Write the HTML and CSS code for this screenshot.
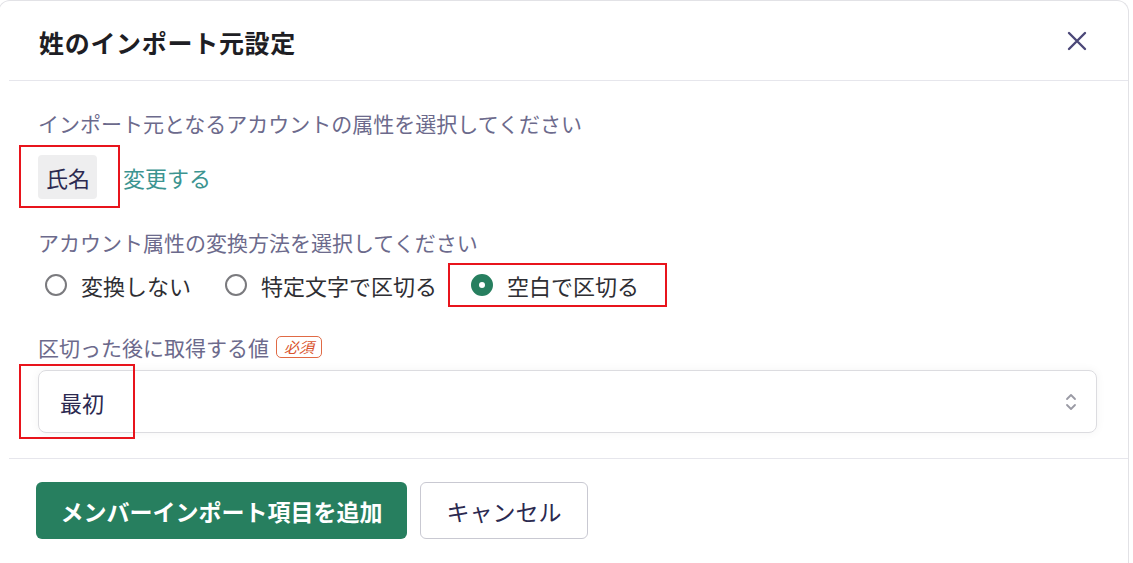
FILE: index.html
```html
<!DOCTYPE html>
<html lang="ja">
<head>
<meta charset="utf-8">
<link rel="stylesheet" href="styles.css">
</head>
<body>
<div class="dialog">
  <div class="header">
    <h1 class="title">姓のインポート元設定</h1>
    <button class="close" aria-label="閉じる">
      <svg width="20" height="20" viewBox="0 0 20 20"><path d="M2 2 L18 18 M18 2 L2 18" stroke="#4b4878" stroke-width="2.4" stroke-linecap="round" fill="none"/></svg>
    </button>
  </div>
  <div class="body">
    <div class="label first">インポート元となるアカウントの属性を選択してください</div>
    <div class="chip-row">
      <span class="chip">氏名</span>
      <a class="link">変更する</a>
    </div>
    <div class="label second">アカウント属性の変換方法を選択してください</div>
    <div class="radios">
      <label class="radio"><span class="circle"></span>変換しない</label>
      <label class="radio"><span class="circle"></span>特定文字で区切る</label>
      <label class="radio"><span class="circle checked"></span>空白で区切る</label>
    </div>
    <div class="label third">区切った後に取得する値<span class="badge">必須</span></div>
    <div class="select">
      <span class="select-text">最初</span>
      <svg class="chev" width="12" height="20" viewBox="0 0 12 20"><path d="M2 7 L6 3 L10 7 M2 13 L6 17 L10 13" stroke="#9a9aa4" stroke-width="1.8" fill="none" stroke-linecap="round" stroke-linejoin="round"/></svg>
    </div>
    <span class="mark m1"></span>
    <span class="mark m2"></span>
    <span class="mark m3"></span>
  </div>
  <div class="footer">
    <button class="btn primary">メンバーインポート項目を追加</button>
    <button class="btn secondary">キャンセル</button>
  </div>
</div>
</body>
</html>
```
FILE: styles.css
```css
html, body {
  margin: 0;
  padding: 0;
  background: #ffffff;
  font-family: "Noto Sans CJK JP", "Noto Sans", sans-serif;
  overflow: hidden;
}
.dialog {
  margin-left: -2px;
  width: 1131px;
  height: 563px;
  box-sizing: border-box;
  border: 1px solid #e2e2e6;
  border-bottom: none;
  border-radius: 12px 12px 0 0;
  background: #fff;
  overflow: hidden;
}
.header {
  height: 79px;
  margin-left: 10px;
  padding: 0 41px 0 30px;
  border-bottom: 1px solid #e6e6ec;
  display: flex;
  align-items: center;
  justify-content: space-between;
}
.title {
  margin: 0;
  font-size: 25px;
  font-weight: 700;
  color: #1e1e24;
  letter-spacing: 0.7px;
  line-height: 1;
  padding-top: 4px;
}
.close {
  border: none;
  background: none;
  padding: 0;
  width: 20px;
  height: 20px;
  display: flex;
}
.body {
  position: relative;
  padding: 28px 31px 25px 39px;
  border-bottom: 1px solid #e6e6ec;
  margin-left: 10px;
}
.body > * { margin-left: -10px; }
.body > .mark { margin-left: 0; }
.label {
  font-size: 21px;
  line-height: 28px;
  color: #6c6a8c;
}
.chip-row {
  margin-top: 18px;
  display: flex;
  align-items: center;
}
.chip {
  background: #eeeeef;
  border-radius: 4px;
  height: 44px;
  line-height: 44px;
  padding: 0 7px 0 8px;
  font-size: 22px;
  color: #2b2950;
}
.link {
  font-size: 22px;
  color: #3c9490;
  margin-left: 26px;
}
.label.second { margin-top: 29px; }
.radios {
  margin-top: 15px;
  display: flex;
  align-items: center;
  height: 28px;
  padding-left: 7px;
}
.radio {
  display: flex;
  align-items: center;
  font-size: 22px;
  color: #2e2e33;
  margin-right: 34px;
  line-height: 28px;
}
.circle {
  width: 18px;
  height: 18px;
  border: 2px solid #7a7a7e;
  border-radius: 50%;
  margin-right: 14px;
  box-sizing: content-box;
  position: relative;
}
.circle.checked {
  border-color: #277f5f;
  background: #277f5f;
}
.circle.checked::after {
  content: "";
  position: absolute;
  left: 6px;
  top: 6px;
  width: 6px;
  height: 6px;
  border-radius: 50%;
  background: #fff;
}
.label.third {
  margin-top: 34px;
  display: flex;
  align-items: center;
}
.badge {
  margin-left: 7px;
  border: 1.5px solid #e06a45;
  border-radius: 5px;
  color: #d9532c;
  font-size: 15px;
  line-height: 20px;
  padding: 0 7px;
  font-style: italic;
}
.select {
  margin-top: 9px;
  height: 63px;
  box-sizing: border-box;
  border: 1px solid #dcdce0;
  border-radius: 8px;
  box-shadow: 0 0 10px rgba(0,0,0,0.05);
  display: flex;
  align-items: center;
  justify-content: space-between;
  padding: 0 19px 0 21px;
}
.select-text {
  font-size: 22px;
  color: #2b2950;
}
.mark {
  position: absolute;
  border: 2px solid #e8141c;
  box-sizing: border-box;
}
.m1 { left: 10px; top: 64px; width: 101px; height: 63px; }
.m2 { left: 439px; top: 182px; width: 219px; height: 44px; }
.m3 { left: 10px; top: 283px; width: 116px; height: 75px; }
.footer {
  padding: 23px 0 0 37px;
  display: flex;
  gap: 13px;
}
.btn {
  height: 57px;
  border-radius: 6px;
  font-family: "Noto Sans CJK JP", "Noto Sans", sans-serif;
  font-size: 23px;
  cursor: pointer;
}
.primary {
  width: 371px;
  background: #277f5f;
  border: none;
  color: #fff;
  font-weight: 700;
}
.secondary {
  width: 168px;
  background: #fff;
  border: 1px solid #c9c9d2;
  color: #2b2950;
}
```
